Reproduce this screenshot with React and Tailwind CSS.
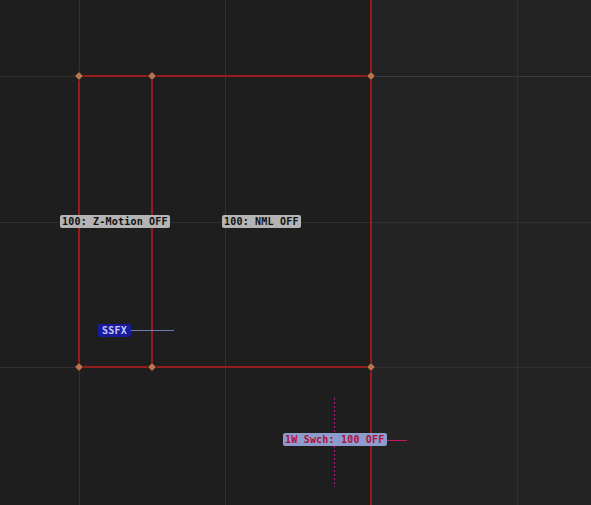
import React from 'react';

// 노드 좌표 (캔버스 상 위치)
const nodes = [
  [79, 76],
  [152, 76],
  [371, 76],
  [79, 367],
  [152, 367],
  [371, 367],
];

const Label = ({ x, y, className, children }) => (
  <div
    className={`absolute h-[13px] rounded-[2px] text-[10px] leading-[13px] font-bold tracking-[0.2px] whitespace-nowrap ${className}`}
    style={{ left: x, top: y, fontFamily: '"DejaVu Sans Mono", monospace' }}
  >
    {children}
  </div>
);

export default function App() {
  return (
    <div className="relative w-[591px] h-[505px] overflow-hidden bg-[#1e1e1e]">
      <div className="absolute left-[371px] top-0 w-[220px] h-[505px] bg-[#232323]" />
      <svg className="absolute left-0 top-0" width="591" height="505">
        {/* 그리드 */}
        <g stroke="#303030" strokeWidth="1">
          <line x1="79.5" y1="0" x2="79.5" y2="505" />
          <line x1="225.5" y1="0" x2="225.5" y2="505" />
          <line x1="517.5" y1="0" x2="517.5" y2="505" />
          <line x1="0" y1="76.5" x2="591" y2="76.5" />
          <line x1="0" y1="222.5" x2="591" y2="222.5" />
          <line x1="0" y1="367.5" x2="591" y2="367.5" />
        </g>
        <line x1="371" y1="76.5" x2="591" y2="76.5" stroke="#363a44" strokeWidth="1" />
        {/* 빨간 경로 */}
        <g stroke="#961c1e" strokeWidth="2" fill="none">
          <line x1="371" y1="0" x2="371" y2="505" />
          <line x1="79" y1="76" x2="371" y2="76" />
          <line x1="79" y1="367" x2="371" y2="367" />
          <line x1="79" y1="76" x2="79" y2="367" />
          <line x1="152" y1="76" x2="152" y2="367" />
        </g>
        {/* 노드 */}
        {nodes.map(([x, y]) => (
          <polygon
            key={`${x}-${y}`}
            points={`${x},${y - 4.5} ${x + 4.5},${y} ${x},${y + 4.5} ${x - 4.5},${y}`}
            fill="#b8744f"
            stroke="#241210"
            strokeWidth="1"
          />
        ))}
        {/* 연결선 */}
        <line x1="131" y1="330.5" x2="174" y2="330.5" stroke="#6a80b4" strokeWidth="1" />
        <line x1="385" y1="440.5" x2="407" y2="440.5" stroke="#c0185a" strokeWidth="1" />
        <line
          x1="334.5"
          y1="398"
          x2="334.5"
          y2="487"
          stroke="#a0207a"
          strokeWidth="1"
          strokeDasharray="2 2"
        />
      </svg>

      <Label x={60} y={215} className="px-[2px] bg-[#b4b4b4] text-[#111]">
        100: Z-Motion OFF
      </Label>
      <Label x={222} y={215} className="px-[2px] bg-[#b4b4b4] text-[#111]">
        100: NML OFF
      </Label>
      <Label x={98} y={324} className="px-[4px] bg-[#1a1a9c] text-[#c4c8ff]">
        SSFX
      </Label>
      <Label x={283} y={433} className="px-[2px] bg-[#8c9ccc] text-[#b01040]">
        1W Swch: 100 OFF
      </Label>
    </div>
  );
}
